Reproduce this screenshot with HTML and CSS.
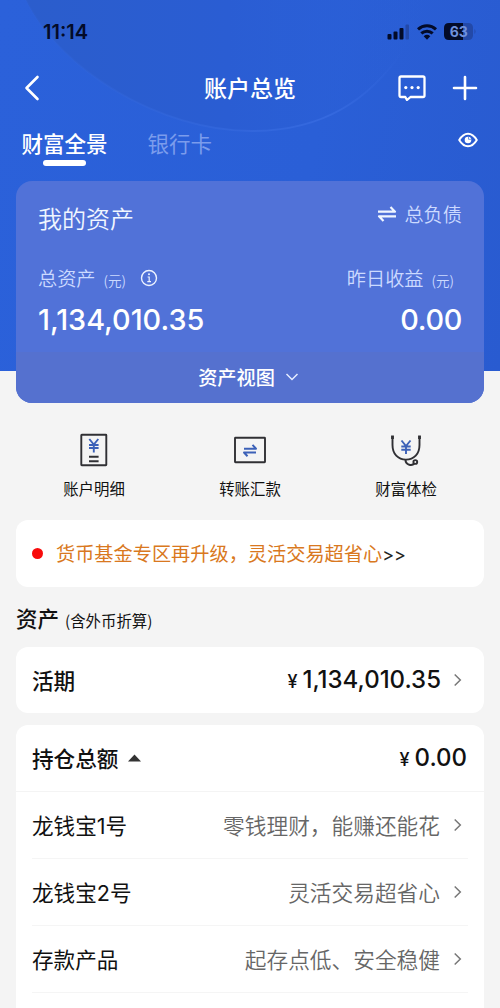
FILE: index.html
```html
<!DOCTYPE html>
<html lang="zh-CN">
<head>
<meta charset="utf-8">
<title>账户总览</title>
<link rel="stylesheet" href="styles.css">
</head>
<body>
<main class="screen">
  <svg class="backdrop" width="500" height="371" viewBox="0 0 500 371" aria-hidden="true">
    <defs>
      <linearGradient id="disc" x1="0" y1="0" x2="1" y2="0">
        <stop offset="0" stop-color="#2b5dcc"/>
        <stop offset=".5" stop-color="#2a5dd3"/>
        <stop offset="1" stop-color="#2b60d8" stop-opacity="0"/>
      </linearGradient>
      <linearGradient id="rim" x1="0" y1="0" x2="1" y2="0">
        <stop offset="0" stop-color="#3367db" stop-opacity=".1"/>
        <stop offset=".8" stop-color="#3569df"/>
        <stop offset="1" stop-color="#3569df" stop-opacity="0"/>
      </linearGradient>
    </defs>
    <path d="M26 0C60 70 160 131 252 131C325 131 370 98 402 52L430 0Z" fill="url(#disc)"/>
    <path d="M26 0C60 70 160 131 252 131C325 131 370 98 402 52" fill="none" stroke="url(#rim)" stroke-width="2"/>
  </svg>

  <div class="status">
    <span class="time">11:14</span>
    <div class="status-icons">
      <svg width="23" height="16" viewBox="0 0 23 16"><g fill="#030b28"><rect x="0.500" y="10" width="4" height="5.500" rx="1"/><rect x="6.500" y="7.500" width="4" height="8" rx="1"/><rect x="12.500" y="4" width="4" height="11.500" rx="1"/></g><rect x="18.500" y="0.500" width="3.500" height="15" rx="1" fill="#2349a8"/></svg>
      <svg width="20" height="16" viewBox="0 0 20 16" fill="none" stroke="#030b28" stroke-width="3"><path d="M1 5.400C6.200.6 13.800.6 19 5.400"/><path d="M4.300 9.400C7.600 6.400 12.400 6.400 15.700 9.400"/><path d="M6.700 12.200Q10 9.500 13.300 12.200L10 15.700Z" fill="#030b28" stroke="none"/></svg>
      <svg width="33" height="17" viewBox="0 0 33 17"><path d="M5 0H19V17H5Q0 17 0 12V5Q0 0 5 0Z" fill="#030b28"/><path d="M19 0H24Q29 0 29 5V12Q29 17 24 17H19Z" fill="#2349a8"/><path d="M30.500 6Q32.500 8.500 30.500 11Z" fill="#2349a8"/><text x="14.800" y="13.600" class="battery-text">63</text></svg>
    </div>
  </div>

  <nav class="nav">
    <svg class="back" width="16" height="26" viewBox="0 0 16 26"><path d="M13.500 2L2.500 13L13.500 24" fill="none" stroke="#fff" stroke-width="2.600" stroke-linecap="round" stroke-linejoin="round"/></svg>
    <h1 class="title">账户总览</h1>
    <div class="nav-icons">
      <svg width="28" height="26" viewBox="0 0 28 26"><path d="M3 1.500H25Q26.500 1.500 26.500 3V20.500Q26.500 22 25 22H12.500L9 25L7.300 22H3Q1.500 22 1.500 20.500V3Q1.500 1.500 3 1.500Z" fill="none" stroke="#fff" stroke-width="2.300" stroke-linejoin="round"/><g fill="#fff"><circle cx="7.800" cy="12.600" r="1.600"/><circle cx="14" cy="12.600" r="1.600"/><circle cx="20.200" cy="12.600" r="1.600"/></g></svg>
      <svg width="26" height="26" viewBox="0 0 26 26"><path d="M13 2V24M2 13H24" fill="none" stroke="#fff" stroke-width="2.600" stroke-linecap="round"/></svg>
    </div>
  </nav>

  <div class="tabs">
    <span class="tab tab-active">财富全景</span>
    <span class="tab">银行卡</span>
    <svg class="eye" width="20" height="16" viewBox="0 0 20 16"><path d="M1.200 8Q5 1.700 10 1.700T18.800 8Q15 14.300 10 14.300T1.200 8Z" fill="none" stroke="#fff" stroke-width="2" stroke-linejoin="round"/><circle cx="10" cy="8" r="3.300" fill="#fff"/><path d="M10.500 4.500V7.300H13.200" fill="none" stroke="#4f7ee0" stroke-width=".8"/></svg>
  </div>

  <section class="card">
    <div class="card-body">
      <div class="card-top">
        <span class="card-title">我的资产</span>
        <span class="debt"><svg width="20" height="18" viewBox="0 0 20 18" fill="none" stroke="#f0f6ff" stroke-width="2.200" stroke-linejoin="round"><path d="M1 6.700H18L13.500 2"/><path d="M19 11.300H2L6.500 16"/></svg>总负债</span>
      </div>
      <div class="labels">
        <span class="label">总资产<small>(元)</small><svg class="info" width="18" height="18" viewBox="0 0 18 18"><circle cx="9" cy="9" r="7.500" fill="none" stroke="#edf3ff" stroke-width="1.400"/><path d="M7.600 8H9.200V12.500M7.300 12.600H11" fill="none" stroke="#edf3ff" stroke-width="1.200"/><circle cx="9" cy="5.300" r="1" fill="#edf3ff"/></svg></span>
        <span class="label label-right">昨日收益<small>(元)</small></span>
      </div>
      <div class="figures"><span>1,134,010.35</span><span class="gain">0.00</span></div>
    </div>
    <div class="card-foot">资产视图<svg width="14" height="10" viewBox="0 0 14 10"><path d="M1.500 2L7 7.500L12.500 2" fill="none" stroke="#e6edff" stroke-width="1.500"/></svg></div>
  </section>

  <div class="actions">
    <div class="action">
      <svg width="36" height="36" viewBox="0 0 36 36" fill="none"><rect x="5.300" y="2.800" width="25" height="30.500" rx=".5" stroke="#303034" stroke-width="1.900"/><path d="M13.300 7L17.800 12.500L22.300 7M17.800 12.500V20.500M13 13H22.600M13 16H22.600" stroke="#3c61b8" stroke-width="1.900"/><path d="M13 24.800H22.600M13 29.200H22.600" stroke="#303034" stroke-width="1.900"/></svg>
      <span>账户明细</span>
    </div>
    <div class="action">
      <svg width="36" height="36" viewBox="0 0 36 36" fill="none"><rect x="3" y="5.800" width="30" height="24.500" rx=".5" stroke="#303034" stroke-width="1.900"/><path d="M12 16.700H24L20.500 12.800M24 20.500H12L15.500 24.200" stroke="#3c61b8" stroke-width="2" stroke-linejoin="round"/></svg>
      <span>转账汇款</span>
    </div>
    <div class="action">
      <svg width="36" height="36" viewBox="0 0 36 36" fill="none"><path d="M4.500 4V13C4.500 22 10 27.600 18 27.600S31.500 22 31.500 13V4" stroke="#303034" stroke-width="1.900"/><path d="M4.500 3.500V7M31.500 3.500V7" stroke="#303034" stroke-width="2.800"/><path d="M13.500 8.500L18 14L22.500 8.500M18 14V22M13.300 14.500H22.700M13.300 17.800H22.700" stroke="#3c61b8" stroke-width="1.900"/><path d="M17.500 27.800C17.500 33.500 24.500 34 26.300 31.400" stroke="#303034" stroke-width="2"/><circle cx="27.300" cy="30" r="1.900" stroke="#303034" stroke-width="1.900"/></svg>
      <span>财富体检</span>
    </div>
  </div>

  <div class="notice"><i class="dot"></i><span class="notice-text">货币基金专区再升级，灵活交易超省心</span><span class="more">&gt;&gt;</span></div>

  <h2 class="heading">资产<small>(含外币折算)</small></h2>

  <div class="panel current">
    <strong class="name">活期</strong>
    <span class="amount"><small>¥</small>1,134,010.35</span>
    <svg class="chevron" width="10" height="14" viewBox="0 0 10 14"><path d="M1.700 1.500L7.300 7L1.700 12.500"/></svg>
  </div>

  <div class="panel holdings">
    <div class="total">
      <strong class="name">持仓总额</strong>
      <svg class="triangle" width="13" height="8" viewBox="0 0 13 8"><path d="M0 7.500L6.500 .5L13 7.500Z" fill="#333"/></svg>
      <span class="amount"><small>¥</small>0.00</span>
    </div>
    <div class="row"><span class="name">龙钱宝<span class="digit">1</span>号</span><span class="desc">零钱理财，能赚还能花</span><svg class="chevron" width="10" height="14" viewBox="0 0 10 14"><path d="M1.700 1.500L7.300 7L1.700 12.500"/></svg></div>
    <div class="row"><span class="name">龙钱宝<span class="digit">2</span>号</span><span class="desc">灵活交易超省心</span><svg class="chevron" width="10" height="14" viewBox="0 0 10 14"><path d="M1.700 1.500L7.300 7L1.700 12.500"/></svg></div>
    <div class="row"><span class="name">存款产品</span><span class="desc">起存点低、安全稳健</span><svg class="chevron" width="10" height="14" viewBox="0 0 10 14"><path d="M1.700 1.500L7.300 7L1.700 12.500"/></svg></div>
  </div>
</main>
</body>
</html>
```

FILE: styles.css
```css
* { box-sizing: border-box; }
body { margin: 0; background: #f4f4f4; font-family: "Noto Sans CJK SC", sans-serif; color: #111; }
svg { display: block; flex: none; }
.screen {
  position: relative;
  isolation: isolate;
  width: 500px;
  height: 1008px;
  overflow: hidden;
  background: linear-gradient(100deg, #2b61da, #2a5fd7 60%, #295bd0) 0 0 / 500px 371px no-repeat #f4f4f4;
}
.backdrop { position: absolute; top: 0; left: 0; z-index: -1; }

.status { display: flex; justify-content: space-between; align-items: center; height: 63px; padding: 0 23px 0 43px; }
.time { padding-top: 1px; font: 600 20px/24px Inter, sans-serif; letter-spacing: 0; color: #030b28; }
.status-icons { display: flex; align-items: center; gap: 7px; }
.battery-text { font: 700 14px Inter, sans-serif; text-anchor: middle; fill: #6f91dd; }

.nav { display: grid; grid-template-columns: 1fr auto 1fr; align-items: center; height: 50px; padding: 0 22px 0 24px; color: #fff; }
.title { margin: 0; padding: 0 2px 2px 0; font-size: 23px; font-weight: 500; line-height: 34px; }
.nav-icons { display: flex; align-items: center; justify-content: flex-end; gap: 26px; }

.tabs { display: flex; height: 68px; padding: 15px 22px 0 21.500px; gap: 40px; }
.tab { display: flex; flex-direction: column; align-items: center; font-size: 21.500px; line-height: 30px; height: 37px; color: #7b9cec; }
.tab-active { font-weight: 500; color: #fff; }
.tab-active::after { content: ""; width: 43px; height: 6px; margin-top: 2px; flex: none; border-radius: 3px; background: #fff; }
.eye { margin: 4px 0 0 auto; }

.card { height: 222px; margin: 0 16px; border-radius: 16px; overflow: hidden; background: #5172d8; }
.card-body { height: 171px; padding: 19px 22px 0; }
.card-top { display: flex; justify-content: space-between; align-items: center; height: 34px; color: #f0f6ff; }
.card-title { font-size: 24px; font-weight: 350; }
.debt { display: flex; align-items: center; gap: 7px; margin-top: -7px; font-size: 19.200px; font-weight: 350; color: #ccdaff; }
.labels { display: flex; justify-content: space-between; margin-top: 29px; height: 30px; }
.label { display: flex; align-items: center; height: 30px; font-size: 19.200px; font-weight: 350; color: #ccdaff; }
.label small { font-size: 13.500px; margin: 4px 0 0 8px; }
.label-right { padding-right: 8px; }
.info { margin-left: 14px; }
.figures { display: flex; justify-content: space-between; font: 500 28.800px/40px Inter, sans-serif; margin-top: 7px; color: #fff; }
.gain { letter-spacing: -.3px; }
.card-foot { display: flex; justify-content: center; align-items: center; gap: 10px; height: 51px; padding: 0 3px 2px 0; background: #5571cf; color: #fff; font-size: 19.200px; font-weight: 500; }

.actions { display: grid; grid-template-columns: repeat(3, 156px); justify-content: center; height: 117px; padding-top: 29px; }
.action { display: flex; flex-direction: column; align-items: center; gap: 9px; font-size: 15.400px; line-height: 23px; }

.notice { display: flex; align-items: center; height: 67px; margin: 0 16px; padding: 0 16px; border-radius: 12px; background: #fff; }
.dot { width: 11px; height: 11px; margin-right: 13px; border-radius: 50%; background: #f80b0b; }
.notice-text { padding-bottom: 2px; font-size: 19.200px; color: #d97820; }
.more { padding-top: 2px; font: 400 18px/24px Inter, sans-serif; color: #222; }

.heading { display: flex; align-items: baseline; gap: 6px; height: 60px; margin: 0 16px; font-size: 21.500px; font-weight: 500; line-height: 62px; }
.heading small { font-size: 15.400px; font-weight: 400; }

.panel { margin: 0 16px; border-radius: 12px; background: #fff; }
.current { display: flex; align-items: center; height: 66px; padding: 0 21px 0 16px; }
.name { padding-bottom: 2px; font-size: 21.600px; font-weight: 400; }
strong.name { font-weight: 500; }
.digit { font-family: Inter, sans-serif; }
.amount { margin-left: auto; padding-top: 2px; font: 500 24px/30px Inter, sans-serif; }
.amount small { margin-right: 5px; font-size: 18px; }
.chevron { margin-left: 12px; fill: none; stroke: #777; stroke-width: 1.500; }
.holdings { height: 300px; margin-top: 12px; }
.total { display: flex; align-items: center; height: 67px; padding: 0 17px 0 16px; border-bottom: 1px solid #f4f4f4; }
.triangle { margin-left: 10px; }
.row { display: flex; align-items: center; height: 67px; margin: 0 16px; padding-right: 5px; border-bottom: 1px solid #f5f5f5; }
.desc { margin-left: auto; padding: 0 1px 2px 0; font-size: 21.700px; font-weight: 350; color: #666; }
```
